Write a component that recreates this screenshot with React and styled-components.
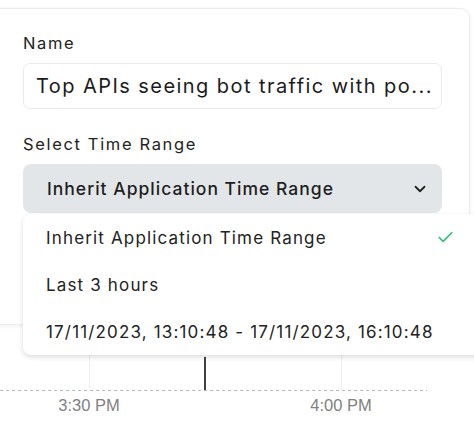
import React from "react";
import styled, { createGlobalStyle } from "styled-components";
import { Check, ChevronDown } from "lucide-react";

const Global = createGlobalStyle`
  html, body { margin: 0; padding: 0; background: #ffffff; }
  body { font-family: "Inter", "Noto Sans", sans-serif; overflow: hidden; }
`;

const Page = styled.div`
  position: relative;
  width: 474px;
  height: 432px;
  overflow: hidden;
  background: #ffffff;
`;

const Panel = styled.div`
  box-sizing: border-box;
  margin-top: 8px;
  margin-left: -20px;
  width: 490px;
  height: 317px;
  padding: 24px 0 0 42px;
  background: #fff;
  border: 1px solid #ececec;
  border-radius: 10px;
  box-shadow: 0 1px 4px rgba(0, 0, 0, 0.06);
`;

const Field = styled.div`
  display: flex;
  flex-direction: column;
  gap: 9px;
  width: 419px;
  margin-bottom: ${(p) => p.$gap || 0}px;
`;

const Label = styled.label`
  font-size: 16.5px;
  line-height: 21px;
  letter-spacing: 0.1em;
  color: #222;
`;

const Input = styled.div`
  box-sizing: border-box;
  height: 46px;
  padding: 0 12px;
  display: flex;
  align-items: center;
  border: 1px solid #e8eaec;
  border-radius: 7px;
  font-size: 20px;
  letter-spacing: 0.072em;
  color: #1b1b1b;
  white-space: nowrap;
  overflow: hidden;
`;

const Select = styled.div`
  box-sizing: border-box;
  height: 49px;
  padding: 0 13px 0 24px;
  display: flex;
  align-items: center;
  justify-content: space-between;
  background: #e3e6e8;
  border-radius: 8px;
  font-size: 17.5px;
  font-weight: 500;
  letter-spacing: 0.058em;
  color: #1e1e1e;
`;

const Menu = styled.ul`
  position: absolute;
  top: 214px;
  left: 23px;
  width: 470px;
  margin: 0;
  padding: 0;
  list-style: none;
  background: #fff;
  border-radius: 8px;
  box-shadow: 0 2px 5px rgba(0, 0, 0, 0.15);
`;

const Item = styled.li`
  height: 47px;
  display: flex;
  align-items: center;
  justify-content: space-between;
  padding: 0 38px 0 23px;
  font-size: 17px;
  letter-spacing: 0.068em;
  color: #222;
`;

const Chart = styled.svg`
  display: block;
`;

export default function App() {
  return (
    <Page>
      <Global />
      <Panel>
        <Field $gap={25}>
          <Label>Name</Label>
          <Input>Top APIs seeing bot traffic with po...</Input>
        </Field>
        <Field>
          <Label>Select Time Range</Label>
          <Select>
            Inherit Application Time Range
            <ChevronDown size={18} strokeWidth={2.4} color="#222" />
          </Select>
        </Field>
      </Panel>
      <Chart width="474" height="107" viewBox="0 325 474 107">
        <line x1="89.5" y1="325" x2="89.5" y2="390" stroke="#eeeeee" />
        <line x1="341.5" y1="325" x2="341.5" y2="390" stroke="#eeeeee" />
        <line x1="0" y1="390.5" x2="427" y2="390.5" stroke="#b4bbbf" strokeDasharray="3 3" />
        <line x1="205" y1="357" x2="205" y2="390" stroke="#111" strokeWidth="1.6" />
        <text x="89" y="411" textAnchor="middle" fill="#808080" fontSize="16.5" fontFamily="Liberation Sans, Arial, sans-serif">3:30 PM</text>
        <text x="341" y="411" textAnchor="middle" fill="#808080" fontSize="16.5" fontFamily="Liberation Sans, Arial, sans-serif">4:00 PM</text>
      </Chart>
      <Menu>
        <Item>
          Inherit Application Time Range
          <Check size={19} color="#34c07e" strokeWidth={2.2} />
        </Item>
        <Item>Last 3 hours</Item>
        <Item>17/11/2023, 13:10:48 - 17/11/2023, 16:10:48</Item>
      </Menu>
    </Page>
  );
}
